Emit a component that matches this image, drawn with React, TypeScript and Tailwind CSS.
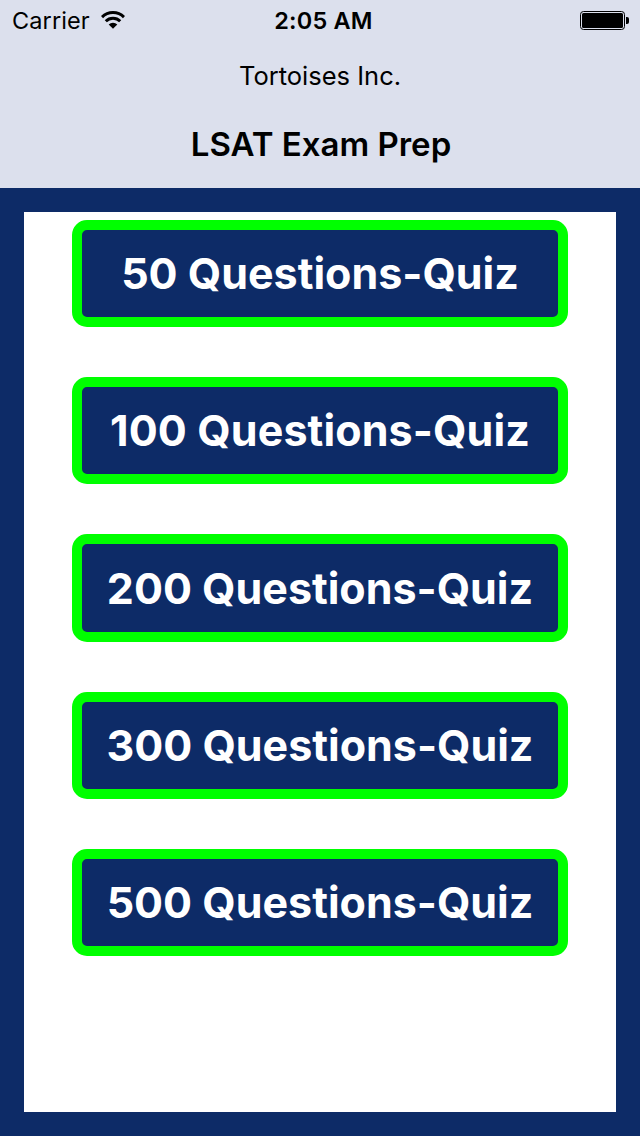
const quizzes = [
    { count: 50, style: "h-[107px] pb-px" },
    { count: 100, style: "h-[107px] pb-px tracking-[0.12px]" },
    { count: 200, style: "h-[108px] pt-px" },
    { count: 300, style: "h-[107px] pb-px" },
    { count: 500, style: "h-[107px] pb-px" },
];

function WifiIcon() {
    return (
        <svg className="mb-px" width="24" height="18" viewBox="0 0 24 18" fill="none" stroke="#000" strokeWidth="3">
            <path d="M1 6.1a15.6 15.6 0 0 1 22 0" />
            <path d="M4.8 10.2a10.2 10.2 0 0 1 14.4 0" />
            <path d="M12 17.8l-4.3-4.2a6.2 6.2 0 0 1 8.6 0z" fill="#000" stroke="none" />
        </svg>
    );
}

function BatteryIcon() {
    return (
        <svg width="49" height="19" viewBox="0 0 49 19">
            <rect x="0.5" y="0.5" width="44" height="18" rx="3" fill="none" stroke="#000" />
            <rect x="2" y="2" width="41" height="15" rx="1.5" fill="#000" />
            <path d="M46 6h1a2 2 0 0 1 2 2v3a2 2 0 0 1-2 2h-1z" fill="#000" />
        </svg>
    );
}

export default function App() {
    return (
        <div className="flex flex-col w-[640px] h-[1136px] bg-[#0d2b67] font-['Inter',sans-serif]">
            <header className="flex flex-col h-[188px] bg-[#dce0ed] text-black">
                <div className="grid grid-cols-3 items-center h-10 pl-3 pr-[11px]">
                    <div className="flex items-center gap-[11px]">
                        <span className="text-[23.5px] leading-[41px] tracking-[0.1px]">Carrier</span>
                        <WifiIcon />
                    </div>
                    <span className="pl-1.5 text-center text-[23.5px] leading-[41px] tracking-[0.2px] font-semibold">2:05 AM</span>
                    <div className="flex justify-end">
                        <BatteryIcon />
                    </div>
                </div>
                <p className="h-[72px] text-center text-[25.5px] leading-[71px]">Tortoises Inc.</p>
                <h1 className="pl-0.5 text-center text-[33px] leading-[64px] font-semibold">LSAT Exam Prep</h1>
            </header>
            <main className="flex flex-col flex-1 gap-[50px] m-6 px-12 pt-2 bg-white">
                {quizzes.map((quiz) => (
                    <button
                        key={quiz.count}
                        className={`${quiz.style} shrink-0 w-full rounded-[15px] border-[10px] border-[#00ff00] bg-[#0d2b67] text-white text-center text-[43px] leading-none font-bold whitespace-nowrap`}
                    >
                        {quiz.count} Questions-Quiz
                    </button>
                ))}
            </main>
        </div>
    );
}
